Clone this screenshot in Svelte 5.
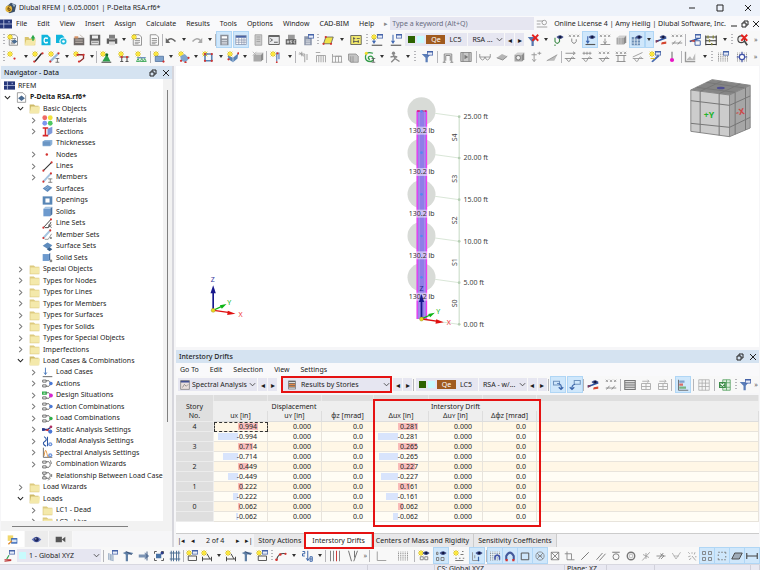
<script lang="ts">
  type Group = { span: number; grip?: boolean; items: string[] };
  type Node = { lv: number; icon: string; label: string; open?: boolean; leaf?: boolean; bold?: boolean };

  const line = (d: string, c = "#777", w = 1.3) => `<path d="${d}" fill="none" stroke="${c}" stroke-width="${w}"/>`;
  const fill = (d: string, c: string) => `<path d="${d}" fill="${c}"/>`;
  const box = (x: number, y: number, w: number, h: number, c: string) => `<rect x="${x}" y="${y}" width="${w}" height="${h}" fill="${c}"/>`;
  const dot = (x: number, y: number, c = "#d3322f", r = 1.5) => `<circle cx="${x}" cy="${y}" r="${r}" fill="${c}"/>`;

  const star = line("M4 0v8M0 4h8M1 1l6 6M7 1l-6 6", "#d9bc00", 1.2) + dot(4, 4, "#ffe92e", 2.2);
  const eye = fill("M6 4q4.500-5 9.500 0q-5 5-9.500 0", "#3c4a86") + dot(11, 4, "#10163c", 1.6);
  const win = box(8, 0, 8, 6, "#4563a8") + box(9, 2, 6, 3, "#e6ecf8");
  const page = fill("M3 1h8l3 3v11H3z", "#fafafa") + line("M3 1h8l3 3v11H3zM5 6h7M5 8.500h7M5 11h7M5 13h5", "#777", 1);
  const xxx = line("M1 1l3 3M4 1l-3 3M6.500 1l3 3M9.500 1l-3 3M12 1l3 3M15 1l-3 3", "#888", 1);
  const mesh = line("M2 2v12M5 2v12M8 2v12M11 2v12M14 2v12", "#777", 1) + line("M1 3h14M1 6h14M1 9h14M1 12h14", "#f7f7f7", 1);
  const links = line("M1 3h5v3H1zM1 10h5v3H1zM6 4h4q2 1 2 4t-2 4H6", "#555", 1.2);
  const cubeG = fill("M2 5l4-3h9l-3 3z", "#cfcfcf") + fill("M2 5h10v9H2z", "#a9a9a9") + fill("M12 5l3-3v9l-3 3z", "#8a8a8a");
  const beam = line("M1 10l6-2 8-3", "#2b56a4", 2.2);

  const icons: Record<string, string> = {
    app: fill("M2 6l6-5 7 3-2 9-7 2-4-4z", "#3d5068") + dot(5, 9, "#e2b43b", 4.5) + line("M6 6q-3 1-2 4t3 1q1-3-3-2", "#704c10", 1.3) + fill("M9 2l5 2-2 3z", "#9eb8cf"),
    flag: box(0, 2, 16, 12, "#26377a") + line("M0 8h16M5 2v12", "#cbd3ea", 1) + box(11, 4, 2, 2, "#8fa0d6"),
    new: page + star + fill("M6 10l4-3 4 3-4 3z", "#4b6d92"),
    open: fill("M1 4h5l1 2h8v9H1z", "#d9c46c") + fill("M3 8h13l-2 7H1z", "#f5e8a8") + fill("M9 6l3-5 3 5h-2v3h-2V6z", "#28a745"),
    cloud: fill("M2 1h8l4 4v10H2z", "#10b5dc") + line("M10.500 6q-5-2-5 2.500t5 2.500", "#fff", 1.8),
    cloudGear: fill("M0 1h8l3 3v8H0z", "#10b5dc") + dot(10, 10, "#eafaff", 5.5) + dot(10, 10, "#20b9dc", 4) + dot(10, 10, "#fff", 1.8),
    toolbox: box(1, 5, 14, 10, "#6f6a68") + box(2, 3, 5, 3, "#d69468") + line("M9 1l5 4M3 8h10M3 11h10", "#c9bfb8", 1.3),
    save: box(1, 1, 14, 14, "#626262") + box(4, 2, 8, 4, "#efefef") + box(3, 9, 10, 5, "#e2e2e2") + line("M4 11h8", "#626262", 1),
    print: box(1, 6, 14, 7, "#5d5d5d") + box(4, 1, 8, 5, "#808080") + box(4, 10, 8, 5, "#ddd") + line("M4 7h8", "#ccc", 1),
    docNew: page + star,
    doc: page,
    undo: line("M3 9q5-6 11 1", "#666", 2) + fill("M1 5v7h6z", "#666"),
    redo: line("M13 9q-5-6-11 1", "#aaa", 2) + fill("M15 5v7H9z", "#aaa"),
    panel: box(3, 1, 11, 14, "#8a8f98") + box(5, 3, 7, 3, "#fff") + line("M5 8.500h7M5 11h7M5 13.200h7", "#e6eaf0", 1.2),
    tableBlue: box(1, 2, 14, 12, "#fff") + box(1, 2, 14, 3, "#4864a6") + line("M1 2h14v12H1zM1 8h14M1 11h14M5 5v9M9 5v9M12 5v9", "#7d8aa6", 0.9),
    list: box(4, 1, 9, 14, "#ccc") + line("M4 1h9v14H4zM6 4h5M6 7h5M6 10h5", "#999", 1),
    term: box(1, 2, 14, 12, "#e9eaec") + line("M1 2h14v12H1z", "#555", 1.2) + box(1, 2, 14, 2, "#666") + line("M3 6l3 2-3 2M8 11h5", "#444", 1.1),
    hsc: box(4, 1, 9, 7, "#999") + box(1, 7, 14, 7, "#555") + line("M3 8.500v4M3 10.500h2M5 8.500v4M10 9H7v1.500h2V12H7M14 9h-2v3h2", "#fff", 0.9),
    panelWin: box(3, 3, 10, 12, "#8a94a8") + win + line("M5 8h6M5 10.500h6M5 13h6", "#fff", 1),
    draw: fill("M5 4h10l-3 9H2z", "#efe34a") + line("M5 4h10l-3 9H2z", "#555", 1) + dot(5, 4) + dot(2, 13) + dot(12, 13),
    sheet: box(1, 2, 14, 12, "#f2e96c") + line("M1 2h14v12H1zM4 6h3M9 6h4M4 10h8M5 4v8M11 8v4", "#555", 1.1),
    loadNew: line("M1 15h14", "#555", 1.5) + line("M4 3v9M2 9l2 3 2-3", "#3e67b1", 1.4) + win + star,
    load: line("M1 15h14", "#555", 1.5) + line("M4 1v11M2 9l2 3 2-3", "#3e67b1", 1.4) + win,
    filterX: fill("M1 4h13l-5 6v6H6v-6z", "#5577b0") + line("M7 1l8 8M15 1l-8 8", "#e5221e", 2.4),
    filter: fill("M1 4h12L9 9v6H6V9z", "#5a7db8") + win,
    eyeSup: line("M4 5v5q3 5 6 0V5M4 14v2", "#3e8a4a", 1.5) + eye,
    xSup: xxx + line("M5 6v4q3 5 6 0V7", "#888", 1.3),
    eyeLoad: line("M2 14h13", "#555", 1.5) + line("M5 3v9M3 9l2 3 2-3", "#3e67b1", 1.5) + eye,
    xLoad: xxx + line("M2 14h13M8 6v7M6 10l2 3 2-3", "#888", 1.2),
    solidG: cubeG + line("M5 4v10M8 4v10", "#ddd", 0.8),
    eyeGrid: box(1, 4, 11, 11, "#6b8db4") + line("M4.500 4v11M8.500 4v11M1 8h11M1 12h11", "#e3edf8", 1) + eye,
    eyeBeam: beam + fill("M9 11l6-1v3l-7 1z", "#d5452f") + fill("M1 8l5 1-5 3z", "#7f3a5a") + eye,
    xBeam: xxx + line("M1 12h14M2 14l4-5M9 14l4-5", "#888", 1.2),
    beamWin: beam + fill("M1 9l7-1v3z", "#d5452f") + win + line("M8 9h7v6H8z", "#4563a8", 1.3),
    abacus: line("M1 2v13M15 2v13M1 4h14M1 9h14M1 14h14", "#333", 1.3) + line("M4 2v4M6 7v4M9 12v3M11 2v4", "#8a8a3a", 1.8),
    magX: line("M11 9l4 6", "#444", 2.2) + `<circle cx="7" cy="7" r="4.500" fill="#eee" stroke="#444" stroke-width="1.500"/>` + line("M7 1l8 8M15 1l-8 8", "#e5221e", 2.4),
    node: star + dot(10, 10),
    line: star + line("M4 14L13 3", "#222", 1.6) + dot(3, 14) + dot(14, 3),
    member: star + line("M3 14L14 3", "#9ab9da", 3) + dot(3, 14) + dot(14, 3) + line("M10 10h5M12.500 10v5M10 15h5", "#555", 1),
    shape: star + line("M6 5h8v5l-5 4", "#902c2c", 1.8) + dot(6, 5) + dot(14, 5) + dot(8, 14),
    cone: star + fill("M9 4l5 10H3z", "#2ca04a") + dot(9, 5, "#126b2a", 2) + line("M2 15h13", "#333", 1.2),
    hinge: star + line("M2 8h13M5 8v6M12 8v6M3 14h4M10 14h4", "#555", 1.4) + dot(5, 8) + dot(12, 8),
    support: star + fill("M2 8h13l-2 2H4z", "#6f93bd") + line("M4 10l-2 4h4zM9 10l-2 4h4zM13 10l-2 4h4z", "#2ca04a", 1.1),
    surface: star + fill("M3 7h11v7H3z", "#7fa3cc") + line("M3 7h11v7H3z", "#4d6e99", 1) + dot(14, 14),
    poly: star + fill("M3 7l6-3 6 6-5 5-6-2z", "#7fa3cc") + dot(4, 13) + dot(10, 15) + dot(14, 9),
    opening: star + line("M4 4h9v9H4z", "#5b84b5", 2.2) + dot(4, 4) + dot(13, 4) + dot(4, 13) + dot(13, 13),
    solidNew: star + fill("M1 6l7 3 7-6-1 7-6 5-6-4z", "#5b84b5") + line("M8 9v6", "#c9dcef", 1) + dot(2, 11) + dot(15, 3),
    solidOff: cubeG + line("M1 1l5 5M6 1L1 6", "#aaa", 1),
    rod: star + box(9, 2, 3, 9, "#d9e3f2") + line("M9 2v12M12 2v9", "#3b65a9", 1.2) + dot(10, 3) + dot(9, 15, "#d3322f", 1.2),
    rodG: line("M1 4h8M5 1v6M2 2l6 5M9 4v11M12 4v8", "#999", 1.2),
    frameG: line("M2 15V6h12v9M5 6v9M8 6v9M11 6v9M1 2h6", "#999", 1.1),
    frameG2: line("M2 15V4M6 15V7h8v8M2 7h12M10 7v8M1 15h14", "#999", 1.1),
    block: fill("M2 4h10l3 3v8H5l-3-3z", "#c4c4c4") + line("M2 4h10l3 3v8H5l-3-3zM5 7v8M8 7v8", "#888", 1),
    spiral: line("M12 3q-9-3-10 4t7 7q5-1 3-5t-6-1q-1 3 2 3", "#339b49", 1.7) + line("M10 10h5M12.500 10v5M10 15h5", "#555", 1) + dot(3, 3, "#f4de2a", 2),
    person: dot(6, 3, "#888", 2.2) + line("M6 5l2 5 6 4M2 8l5-1 4 1M8 10l-5 5", "#888", 1.8),
    arch: line("M3 15V4h10v11M5 13V6h6v7M1 15h4M11 15h4", "#888", 1.3),
    film: box(1, 2, 14, 12, "#c8c8c8") + line("M1 2h14v12H1zM4 2v12M12 2v12", "#777", 1) + fill("M6 5l5 3-5 3z", "#777"),
    curve: line("M1 4v4q4 8 7 0q3 8 7 0V4M1 8h14", "#888", 1.1),
    slab: fill("M1 9l7-5 7 3-6 5z", "#b5b5b5") + line("M1 9l8 3 6-5", "#888", 1.2),
    cam: cubeG + `<circle cx="7" cy="9" r="3" fill="#eee" stroke="#666"/>`,
    tee: line("M2 5h7M5.500 2v12M3 11l2.500 3 2.500-3M10 3h5M12.500 1v4", "#999", 1.3),
    wedge: fill("M1 13l14-8-4 8z", "#bbb") + line("M1 13l14-8", "#888", 1),
    res1: line("M2 3h12M12 1l3 2-3 2M1 10h14M3 10q4 8 6 0q2-4 5 0", "#888", 1.2),
    res2: line("M2 3h12M4 1v4M8 1v4M12 1v4M1 10h14M3 10q4 8 6 0q2-4 5 0", "#888", 1.1),
    res3: xxx + line("M1 10h14M3 10q4 8 6 0q2-4 5 0", "#888", 1.2),
    res4: xxx + line("M1 6h14M4 6v8M12 6v8M2 14h12", "#888", 1.2),
    res5: line("M1 8l13-6M1 10h14M3 10q4 8 6 0q2-4 5 0", "#999", 1.2),
    wizard: star + win + fill("M3 14l9-9 2 2-9 8z", "#4a6cb0") + line("M2 10h6", "#e0c020", 1.5),
    pin: line("M8 1v9", "#555", 1.2) + dot(8, 12, "#e815c4", 2.8),
    axes: line("M2 1v13h13", "#999", 1.8) + fill("M4 11l4-4 3 4 4-8v9H4z", "#bbb"),
    gridWin: mesh + win,
    gridPin: mesh + line("M8 1v14M1 8h14", "#3e50a8", 1.4) + `<circle cx="8" cy="8" r="3.500" fill="#fff" stroke="#3e50a8" stroke-width="1.500"/>`,
    // navigator
    file: fill("M2 1h8l4 4v10H2z", "#fff") + line("M2 1h8l4 4v10H2z", "#777", 1) + fill("M3 9l5-4 5 4-5 4z", "#49698f"),
    folder: fill("M1 2h6l2 2h6v11H1z", "#ddca7f") + box(2, 5, 13, 9, "#f4e9ab"),
    folderOpen: fill("M1 2h6l2 2h5v11H1z", "#cdb968") + fill("M3 5h13l-1 10H1z", "#f4e9ab"),
    materials: dot(4, 4, "#ef6a66", 3.5) + dot(12, 4, "#f0e23c", 3.5) + dot(4, 12, "#7c96f0", 3.5) + dot(12, 12, "#4ec861", 3.5),
    sections: fill("M8 4l7-3v9l-7 4z", "#7e97d8") + line("M1 3h8M5 3v11M1 14h8", "#d5272a", 2.2),
    thick: fill("M1 5l3-2h11v6l-3 3H1z", "#8db2d8") + fill("M1 5h11v6H1z", "#6b96c4"),
    dotRed: dot(7, 8, "#d3322f", 1.8),
    lineT: line("M2 14L14 2", "#333", 1.5) + dot(2, 14) + dot(14, 2),
    memberT: line("M2 14L13 2", "#a6c4e0", 3) + dot(2, 14) + dot(13, 2) + line("M9 10h6M12 10v5M9 15h6", "#666", 1.1),
    surfT: fill("M1 8l7-5 7 4-7 6z", "#5e8bbd") + line("M4 8l5-3M6 10l5-4", "#a4c4e2", 1),
    openT: box(1, 2, 14, 12, "#5886b6") + box(5, 5, 6, 6, "#fff"),
    solidT: fill("M2 4l3-3h10l-3 3z", "#a8c6e4") + box(2, 4, 10, 11, "#6d9ace") + fill("M12 4l3-3v11l-3 3z", "#4772a5"),
    setT: line("M2 14L13 2M4 14h5l4-8", "#333", 1.3) + dot(2, 14) + dot(13, 2) + line("M9 10l5 4M14 10l-5 4", "#555", 1.2),
    msetT: line("M2 13L12 2", "#a6c4e0", 3) + line("M4 15h5l5-8", "#888", 1.2) + dot(2, 13) + dot(12, 2) + dot(13, 13, "#777"),
    ssetT: fill("M1 7l7-5 7 4-6 6z", "#5e8bbd") + fill("M7 12l4-3 4 3-4 3z", "#39608c"),
    vsetT: box(1, 3, 9, 10, "#6d9ace") + fill("M10 3l2-2v10l-2 2z", "#4772a5") + dot(13, 13, "#888", 2),
    lcT: line("M1 14h14", "#777", 1.6) + line("M5 1v10M3 8l2 3 2-3", "#4f7ebe", 1.4),
    actT: links + dot(13, 8, "#4a78d6", 2.5),
    dsT: line("M1 3h5v3H1z", "#2fae4a", 2) + line("M1 10h5v3H1zM6 4h4q2 1 2 4t-2 4H6", "#555", 1.2) + dot(13, 8, "#d624d0", 2.8),
    lcoT: links + dot(13, 8, "#2fae4a", 2.5),
    statT: line("M1 8h7l6-4", "#2b3b8c", 2) + fill("M0 6h4v4H0z", "#2b3b8c") + fill("M4 9l6-2v4z", "#d3322f") + dot(12, 11, "#4a78d6", 3) + dot(13, 4, "#b03060", 2),
    modT: line("M3 1q6 4 1 7t2 7M8 1v14", "#2b56a4", 1.5) + dot(12, 12, "#6f95dc", 3) + dot(12, 12, "#fff", 1),
    specT: line("M2 1v14h13", "#555", 1.2) + line("M3 13q2-14 4-4t4 3", "#e08a2a", 1.2) + dot(12, 12, "#6f95dc", 3) + dot(12, 12, "#fff", 1),
    wizT: links + line("M12 2l2 5", "#888", 1.5),
    relT: links + line("M3 6v4M12 12l-3 3M14 6v4", "#555", 1.2),
    navData: fill("M1 2h8v8H1z", "#f0d76c") + box(6, 6, 9, 8, "#2f62b5") + box(7, 8, 7, 4, "#d8e4f6") + line("M2 15l5-5", "#e08a2a", 2),
    navEye: fill("M1 8q7-8 14 0q-7 8-14 0", "#6272b8") + dot(8, 8, "#1d265c", 3.2) + dot(7, 7, "#fff", 0.9),
    navCam: box(1, 4, 9, 8, "#555") + fill("M10 8l5-4v8z", "#555"),
    // table panel
    spectral: box(1, 1, 14, 14, "#e9dfdc") + box(1, 1, 14, 3, "#3f4f96") + line("M1 1h14v14H1zM4 12l3-5 3 3 3-3", "#666", 1),
    stories: box(2, 1, 12, 14, "#666") + line("M3 4h10M3 13h10", "#ddd", 1.8) + line("M3 7h10M3 10h10", "#e58a4a", 1.8),
    pickA: line("M2 3h8v5H2z", "#6f93bd", 1.4) + line("M7 6q7 0 5 8M9 11l3 3 3-3", "#3b65a9", 1.6),
    pickB: line("M7 2h8v5H7z", "#6f93bd", 1.4) + line("M8 7q-5 1-4 7M1 11l3 3 3-3", "#3b65a9", 1.6),
    tableG: box(1, 2, 14, 12, "#ddd") + line("M1 2h14v12H1zM1 5h14M1 8h14M1 11h14", "#777", 1.4),
    tableUp: line("M2 6h12v8H2zM2 10h12M8 6v8M3 3h9M10 1l2 2-2 2", "#aaa", 1.2),
    bars: line("M2 1v14h13", "#666", 1.2) + box(3, 2, 7, 3, "#7fa3cc") + box(3, 6, 5, 3, "#d96c66") + box(3, 10, 9, 3, "#77b583"),
    tableL: box(1, 1, 14, 14, "#f4f4f4") + line("M1 1h14v14H1zM1 5.500h14M1 10h14M5.500 1v14M10 1v14", "#aaa", 1),
    excel: fill("M5 1h10v14H5z", "#dceede") + line("M5 1h10v14H5zM10 1v14M5 5h10M5 11h10", "#4c9b58", 1) + box(0, 4, 9, 8, "#3c8c49") + line("M2 6l5 4M7 6l-5 4", "#fff", 1.4),
    // bottom bar
    cs: line("M2 13h9M2 15l9-1", "#b33", 1.5) + line("M5 12l3-5", "#2ca04a", 1.5) + win,
    bWin: fill("M3 4l7 3v8l-7-2z", "#8fa5bf") + line("M5 5v9M8 6v8", "#fff", 0.9) + win,
    bWinNew: star + line("M3 8h11v6H3z", "#555", 1.3) + win,
    bT: fill("M1 4l5-2 9 2-2 2H8v9H5V6z", "#5f7fa5") + line("M5 2l8 4", "#2c3f63", 1),
    bArrow: fill("M1 6h8V3l6 5-6 5v-3H1z", "#7b93b3") + line("M12 2v12", "#39537c", 1.2),
    bSel: line("M2 5V2h3M11 2h3v3M14 11v3h-3M5 14H2v-3", "#555", 1.3) + box(4, 5, 7, 6, "#4772a5") + dot(12, 4, "#2b3b8c", 2),
    bGridBlue: line("M3 1v14M6 1v14M10 1v14M13 1v14M1 4h14M1 12h14", "#4b6d92", 1.3),
    dim: star + line("M2 12h12M2 9v6M14 9v6M8 5l4 7", "#444", 1.3),
    path: line("M2 14q2-11 12-9", "#444", 1.4) + dot(2, 13, "#d3322f", 1.8) + dot(7, 6, "#d3322f", 1.8) + dot(14, 5),
    num: line("M2 2h3v3H2v3h3M9 1v13M7 11l2 3 2-3M12 9h3v6h-3zM12 12h3", "#3b65a9", 1.3),
    vlines: line("M2 1v14M6 1v14M14 1v14", "#777", 1.2) + line("M10 1v14", "#c33", 1.3),
    vee: line("M2 1l4 14M14 1L9 15M10 1v9", "#666", 1.2),
    ell: line("M3 2v12h12", "#999", 1.2),
    grid: mesh,
    eyeStar: star + line("M3 9h4v4H3zM9 9h4v4H9z", "#777", 1.1) + eye,
    eyePts: line("M2 3h2v3H2zM2 10h3v4H2zM8 10h4v4H8z", "#777", 1.2) + eye,
    ptStar: star + line("M12 2h2M10 6h4M3 11h2M8 11h2M13 11h2M3 14h11", "#777", 1.3),
    eyePtr: line("M2 3v11h9M5 7v4", "#888", 1.1) + eye + line("M10 9v6", "#3b65a9", 1.6),
    gridMag: mesh + line("M8 13V9q3-5 6 0v4", "#3e50a8", 2),
    magnet: line("M3 13V8q5-9 10 0v5", "#445a9c", 2.8) + box(2, 12, 3, 3, "#d3322f") + box(11, 12, 3, 3, "#d3322f"),
    sq: line("M3 4h10v9H3z", "#555", 1.3),
    circX: `<circle cx="8" cy="8" r="5.500" fill="none" stroke="#777"/>` + line("M4 4l8 8M12 4l-8 8M5 8h6", "#777", 1),
    boxX: line("M3 3h10v10H3zM3 3l10 10M13 3L3 13", "#777", 1.1),
    perp: line("M4 2v11h10M1 5h9v8", "#888", 1.2),
    diag: line("M3 13L13 3", "#777", 1.3),
    diag2: line("M2 13l8-9M6 14l8-9", "#777", 1.2),
    tang: line("M3 3h10", "#777", 1.3) + `<circle cx="8" cy="9" r="4" fill="none" stroke="#777" stroke-width="1.200"/>`,
    ring: `<circle cx="8" cy="8" r="5" fill="none" stroke="#777" stroke-width="1.800"/><circle cx="8" cy="8" r="2.500" fill="none" stroke="#aaa"/>`,
    snapA: line("M3 14L13 3M4 6l8 4M8 4v8", "#999", 1.1),
    snapB: line("M2 8h12M5 12l6-8M7 5l5 3-4 4", "#888", 1.2),
    snapC: line("M3 4l5 8 6-9M5 8h7", "#aaa", 1.1),
    snapD: line("M3 3l2 2M8 3v2M12 3l-1 3M3 9l3-1M8 8l5 6M4 13l3-2M12 9h2", "#999", 1.1),
    quad: line("M2 2h4v4H2zM10 2h4v4h-4zM2 10h4v4H2zM10 10h4v4h-4z", "#777", 1.1),
    dash: line("M3 3h2M7 3h2M11 3h2v2M13 8v2M13 13h-2M9 13H7M5 13H3v-2M3 8V6", "#777", 1.3),
    tilt: fill("M5 4h10l-4 8H1z", "#9eabb8") + line("M5 4h10l-4 8H1z", "#444", 1.2),
    hbeam: line("M1 4v8M15 4v8M1 8h14", "#444", 1.5),
    listFind: line("M1 4h8M1 8h5M1 12h14", "#888", 1) + `<circle cx="11" cy="6" r="3" fill="none" stroke="#888"/>`,
  };

  // "*" marks a pressed button, "^" adds a drop-down arrow after it, ">" is the overflow mark
  const mainBar: Group[] = [
    { span: 160, grip: true, items: ["new", "open", "cloud", "cloudGear", "toolbox", "save", "print^", "docNew", "doc"] },
    { span: 53, items: ["undo^", "redo^"] },
    { span: 102, items: ["*panel", "*tableBlue", "list", "term", "hsc", "panelWin"] },
    { span: 47, grip: true, items: ["draw^", "sheet"] },
    { span: 38, grip: true, items: ["loadNew", "load"] },
  ];
  const viewBar: Group[] = [
    { span: 163, items: ["filterX^", "eyeSup", "xSup", "*eyeLoad", "xLoad", "solidG", "*eyeGrid^", "eyeBeam", "xBeam"] },
    { span: 44, items: ["beamWin", "abacus^"] },
    { span: 28, grip: true, items: ["magX", ">"] },
  ];
  const editBar: Group[] = [
    { span: 93, grip: true, items: ["node^", "line", "member^", "shape^"] },
    { span: 54, items: ["cone", "hinge", "support"] },
    { span: 117, items: ["surface^", "poly^", "opening^", "solidNew^", "solidOff"] },
    { span: 29, items: ["rod^"] },
    { span: 119, items: ["rodG", "frameG", "frameG2", "block", "spiral^", "person^"] },
    { span: 22, grip: true, items: ["filter"] },
    { span: 38, items: ["arch", "film"] },
    { span: 86, items: ["curve", "slab", "cam", "tee", "wedge"] },
    { span: 121, items: ["res1", "res2", "res3", "res4", "res5", "wizard", "pin"] },
    { span: 29, items: ["axes^"] },
    { span: 48, grip: true, items: ["gridWin", "gridPin", ">"] },
  ];
  const resultBar: Group[] = [
    { span: 36, items: ["*pickA", "*pickB"] },
    { span: 38, items: ["eyeBeam", "xBeam"] },
    { span: 53, items: ["tableG", "tableUp", "tableUp"] },
    { span: 22, items: ["*bars"] },
    { span: 21, items: ["tableL"] },
    { span: 20, items: ["excel"] },
    { span: 23, grip: true, items: ["filter", ">"] },
  ];
  const snapBar: Group[] = [
    { span: 80, items: ["bWin", "bT", "bArrow", "bSel", "bGridBlue"] },
    { span: 87, items: ["bWinNew", "dim^", "dim", "bT", "bWinNew"] },
    { span: 52, grip: true, items: ["path^", "num^"] },
    { span: 44, items: ["vlines", "vee", ">"] },
    { span: 44, items: ["ell", "grid"] },
    { span: 72, items: ["eyeStar", "*eyePts", "ptStar", "*eyePtr"] },
    { span: 276, items: ["*gridMag", "*magnet", "*sq", "*circX", "boxX", "perp", "diag", "diag2", "tang", "ring", "snapA", "snapB", "snapC", "snapD", "*quad", "*dash", "*tilt", "*hbeam"] },
  ];

  const menus = ["File", "Edit", "View", "Insert", "Assign", "Calculate", "Results", "Tools", "Options", "Window", "CAD-BIM", "Help"];
  const panelMenus = ["Go To", "Edit", "Selection", "View", "Settings"];

  const tree: Node[] = [
    { lv: 0, icon: "flag", label: "RFEM", leaf: true },
    { lv: 1, icon: "file", label: "P-Delta RSA.rf6*", open: true, bold: true },
    { lv: 2, icon: "folderOpen", label: "Basic Objects", open: true },
    { lv: 3, icon: "materials", label: "Materials" },
    { lv: 3, icon: "sections", label: "Sections" },
    { lv: 3, icon: "thick", label: "Thicknesses", leaf: true },
    { lv: 3, icon: "dotRed", label: "Nodes" },
    { lv: 3, icon: "lineT", label: "Lines" },
    { lv: 3, icon: "memberT", label: "Members" },
    { lv: 3, icon: "surfT", label: "Surfaces", leaf: true },
    { lv: 3, icon: "openT", label: "Openings", leaf: true },
    { lv: 3, icon: "solidT", label: "Solids", leaf: true },
    { lv: 3, icon: "setT", label: "Line Sets", leaf: true },
    { lv: 3, icon: "msetT", label: "Member Sets", leaf: true },
    { lv: 3, icon: "ssetT", label: "Surface Sets", leaf: true },
    { lv: 3, icon: "vsetT", label: "Solid Sets", leaf: true },
    { lv: 2, icon: "folder", label: "Special Objects" },
    { lv: 2, icon: "folder", label: "Types for Nodes" },
    { lv: 2, icon: "folder", label: "Types for Lines" },
    { lv: 2, icon: "folder", label: "Types for Members" },
    { lv: 2, icon: "folder", label: "Types for Surfaces" },
    { lv: 2, icon: "folder", label: "Types for Solids" },
    { lv: 2, icon: "folder", label: "Types for Special Objects" },
    { lv: 2, icon: "folder", label: "Imperfections" },
    { lv: 2, icon: "folderOpen", label: "Load Cases & Combinations", open: true },
    { lv: 3, icon: "lcT", label: "Load Cases" },
    { lv: 3, icon: "actT", label: "Actions" },
    { lv: 3, icon: "dsT", label: "Design Situations" },
    { lv: 3, icon: "actT", label: "Action Combinations" },
    { lv: 3, icon: "lcoT", label: "Load Combinations" },
    { lv: 3, icon: "statT", label: "Static Analysis Settings" },
    { lv: 3, icon: "modT", label: "Modal Analysis Settings" },
    { lv: 3, icon: "specT", label: "Spectral Analysis Settings" },
    { lv: 3, icon: "wizT", label: "Combination Wizards" },
    { lv: 3, icon: "relT", label: "Relationship Between Load Case", leaf: true },
    { lv: 2, icon: "folder", label: "Load Wizards" },
    { lv: 2, icon: "folderOpen", label: "Loads", open: true },
    { lv: 3, icon: "folder", label: "LC1 - Dead" },
    { lv: 3, icon: "folder", label: "LC2 - Live" },
  ];

  const stories = [
    { no: 4, u: 0.994, du: 0.281 },
    { no: 3, u: 0.714, du: 0.265 },
    { no: 2, u: 0.449, du: 0.227 },
    { no: 1, u: 0.222, du: 0.161 },
    { no: 0, u: 0.062, du: 0.062 },
  ];
  const rows = stories.flatMap(s => [
    { no: String(s.no), u: s.u, du: s.du },
    { no: "", u: -s.u, du: -s.du },
  ]);
  const BAR = 20;
  const maxU = Math.max(...stories.map(s => s.u));
  const maxDu = Math.max(...stories.map(s => s.du));

  const levels = [
    { y: 64, label: "25.00 ft", story: "S4" },
    { y: 188, label: "20.00 ft", story: "S3" },
    { y: 313, label: "15.00 ft", story: "S2" },
    { y: 438, label: "10.00 ft", story: "S1" },
    { y: 562, label: "5.00 ft", story: "S0" },
  ];

  const tabs = ["Story Actions", "Interstory Drifts", "Centers of Mass and Rigidity", "Sensitivity Coefficients"];
  let activeTab = $state("Interstory Drifts");
</script>

{#snippet icon(name: string)}
  <svg class="ico" viewBox="0 0 16 16" aria-hidden="true">{@html icons[name]}</svg>
{/snippet}

{#snippet groups(list: Group[])}
  {#each list as g, i}
    {#if g.grip}<span class="grip"></span>{:else if i > 0}<span class="sep"></span>{/if}
    <div class="group" style="flex-grow:{g.span}">
      {#each g.items as item}
        {@const name = item.replace(/[*^]/g, "")}
        {#if name === ">"}
          <button class="more" aria-label="More">»</button>
        {:else}
          <button class="tool" class:on={item.startsWith("*")} aria-label={name}>{@render icon(name)}</button>
          {#if item.endsWith("^")}
            <button class="caret" class:on={item.startsWith("*")} aria-label="{name} options"></button>
          {/if}
        {/if}
      {/each}
    </div>
  {/each}
{/snippet}

{#snippet combo(label: string, value: string)}
  <span class="combo">
    <select aria-label={label}><option>{value}</option></select>
    <svg class="chev" viewBox="0 0 8 8" aria-hidden="true"><path d="M1 2.500l3 3 3-3" /></svg>
  </span>
{/snippet}

{#snippet loadCase(value: string)}
  <div class="lc">
    <span class="swatch green"></span>
    <span class="swatch cyan"></span>
    <span class="tag">Qe</span>
    <span class="lcno">LC5</span>
    {@render combo("Load case", value)}
  </div>
{/snippet}

{#snippet stepper()}
  <span class="stepper">
    <button aria-label="Previous">◂</button>
    <button aria-label="Next">▸</button>
  </span>
{/snippet}

{#snippet barCell(v: number, max: number)}
  <span class="bar" class:neg={v < 0} style="width:{Math.ceil(Math.abs(v) / max * BAR)}px"></span>
  <span class="num">{v.toFixed(3)}</span>
{/snippet}

{#snippet winButtons()}
  <button aria-label="Float"><svg viewBox="0 0 8 8"><path d="M1 3h4v4H1zM3 3V1h4v4H5" /></svg></button>
  <button aria-label="Close"><svg viewBox="0 0 8 8"><path d="M1 1l6 6M7 1L1 7" /></svg></button>
{/snippet}

{#snippet triad()}
  <path d="M110 120V60" stroke="#17178c" stroke-width="5" />
  <path d="M110 46l8 24h-16z" fill="#17178c" />
  <path d="M112 120l24-11" stroke="#0db515" stroke-width="4" />
  <path d="M150 102l-20 4 6 10z" fill="#0db515" />
  <path d="M112 121l48 7" stroke="#e01010" stroke-width="4" />
  <path d="M177 131l-23-9-2 13z" fill="#e01010" />
  <circle cx="110" cy="121" r="6" fill="#e8d820" stroke="#7c7410" />
{/snippet}

<div class="app">
  <header class="title">
    {@render icon("app")}
    <h1>Dlubal RFEM | 6.05.0001 | P-Delta RSA.rf6*</h1>
    <div class="winctl">
      <button aria-label="Minimize"><svg viewBox="0 0 8 8"><path d="M1 4h6" /></svg></button>
      <button aria-label="Maximize"><svg viewBox="0 0 8 8"><path d="M1 1h6v6H1z" /></svg></button>
      <button aria-label="Close"><svg viewBox="0 0 8 8"><path d="M1 1l6 6M7 1L1 7" /></svg></button>
    </div>
  </header>

  <nav class="menubar">
    {@render icon("flag")}
    {#each menus as m}<button>{m}</button>{/each}
    <span class="go">▸</span>
    <input type="text" placeholder="Type a keyword (Alt+Q)" aria-label="Keyword search" />
    {@render icon("listFind")}
    <span class="license">Online License 4 | Amy Heilig | Dlubal Software, Inc.</span>
    <div class="mdictl">
      <button aria-label="Minimize"><svg viewBox="0 0 8 8"><path d="M1 6h6" /></svg></button>
      {@render winButtons()}
    </div>
  </nav>

  <div class="toolbar">
    {@render groups(mainBar)}
    <div class="lcbox">{@render loadCase("RSA ...")}{@render stepper()}</div>
    {@render groups(viewBar)}
  </div>
  <div class="toolbar">{@render groups(editBar)}</div>

  <main>
    <aside class="nav">
      <div class="dock"><h2>Navigator - Data</h2>{@render winButtons()}</div>
      <div class="treebox">
        <ul>
          {#each tree as n}
            <li class="lv{n.lv}" class:bold={n.bold}>
              {#if n.lv > 0}
                {#if n.leaf}
                  <span class="twist"></span>
                {:else}
                  <button class="twist" aria-label="Toggle {n.label}">
                    <svg viewBox="0 0 8 8" class:open={n.open}><path d="M2.500 1l3 3-3 3" /></svg>
                  </button>
                {/if}
              {/if}
              {@render icon(n.icon)}
              <span>{n.label}</span>
            </li>
          {/each}
        </ul>
        <div class="vscroll"><span></span></div>
      </div>
      <div class="hscroll"><span></span></div>
      <div class="navtabs">
        <button class="cur" aria-label="Data">{@render icon("navData")}</button>
        <button aria-label="Display">{@render icon("navEye")}</button>
        <button aria-label="Views">{@render icon("navCam")}</button>
      </div>
    </aside>

    <section class="work">
      <div class="view">
        <svg class="scene" viewBox="0 0 582 281" preserveAspectRatio="xMidYMid meet">
          <svg x="0" y="204" width="200" height="130" viewBox="0 0 600 390">
            {@render triad()}
            <text x="103" y="37" fill="#3a3aa0">Z</text>
            <text x="152" y="106" fill="#0db515">Y</text>
            <text x="186" y="140" fill="#f03030">X</text>
          </svg>

          <svg x="214" y="24" width="120" height="240" viewBox="0 0 360 720">
            <path d="M206 78V703" stroke="#c5d9c3" stroke-width="3" />
            {#each levels as l}
              <path d="M134 {l.y + 6}L206 {l.y + 16}" stroke="#c5d9c3" stroke-width="2" />
              <circle cx="206" cy={l.y + 16} r="4" fill="#b5ceb3" />
              <circle cx="93" cy={l.y} r="42" fill="#d8dbd7" />
            {/each}
            <path d="M94 688L206 703" stroke="#c5d9c3" stroke-width="2" />
            <circle cx="206" cy="703" r="4" fill="#b5ceb3" />
            <rect x="79" y="62" width="30" height="625" fill="#8f7de8" />
            <path d="M80 62V687M108 62V687" stroke="#f03cf0" stroke-width="4" />
            <path d="M86 62V687M103 62V687" stroke="#c59aee" stroke-width="2" />
            <path d="M80 63h28" stroke="#e0106a" stroke-width="5" stroke-dasharray="8 3" />
            {#each levels as l}
              <circle cx="93" cy={l.y} r="4" fill="#5a86ee" />
              <rect x="56" y={l.y + 46} width="74" height="24" fill="#fff" opacity="0.5" />
              <text x="55" y={l.y + 65} fill="#333">130.2 lb</text>
              <text x="219" y={l.y + 23} fill="#444">{l.label}</text>
              <text transform="translate(198 {l.y + 90}) rotate(-90)" fill="#444">{l.story}</text>
            {/each}
            <text x="219" y="710" fill="#444">0.00 ft</text>
            <svg x="-17" y="566" width="200" height="180" viewBox="0 0 200 180" overflow="visible">
              {@render triad()}
            </svg>
            <text x="87" y="602" fill="#26268c">Z</text>
            <text x="137" y="671" fill="#0db515">Y</text>
            <text x="169" y="706" fill="#f03030">X</text>
          </svg>

          <svg x="494" y="0" width="90" height="80" viewBox="0 0 270 240">
            <g stroke="#888" stroke-width="3" stroke-linejoin="round">
              <path d="M61 72L125 41L239 58L177 87z" fill="#858585" />
              <path d="M61 72L177 87V212L61 196z" fill="#cccccc" />
              <path d="M177 87L239 58V186L177 212z" fill="#a6a6a6" />
            </g>
            <g stroke="#777" stroke-width="3" fill="none">
              <path d="M89 76V200M146 83V208M61 104L177 118L239 90M61 172L177 184L239 154M194 80V205M225 65V192" />
              <path d="M89 76L153 46M146 83L209 54M78 64L194 79M108 49L222 66" />
            </g>
            <ellipse cx="151" cy="66" rx="12" ry="4" fill="#4e4e92" />
            <text class="face" x="100" y="155" fill="#22b32b">+Y</text>
            <text class="face" x="197" y="147" fill="#cf4545" transform="rotate(-10 206 140)">-X</text>
          </svg>
        </svg>
      </div>

      <div class="panel">
        <div class="dock"><h2>Interstory Drifts</h2>{@render winButtons()}</div>
        <nav class="menubar sub">
          {#each panelMenus as m}<button>{m}</button>{/each}
        </nav>
        <div class="toolbar">
          <div class="field analysis">{@render icon("spectral")}{@render combo("Analysis", "Spectral Analysis")}</div>
          {@render stepper()}
          <div class="field results marked">{@render icon("stories")}{@render combo("Results", "Results by Stories")}</div>
          {@render stepper()}
          <span class="sep"></span>
          <div class="lcbox case">{@render loadCase("RSA - w/...")}{@render stepper()}</div>
          <span class="sep"></span>
          {@render groups(resultBar)}
        </div>

        <div class="sheet">
          <table>
            <colgroup>
              <col class="cno" /><col class="c1" /><col class="c1" /><col class="c2" /><col class="c3" /><col class="c1" /><col class="c1" /><col />
            </colgroup>
            <thead>
              <tr class="strip"><th></th><th></th><th></th><th></th><th></th><th></th><th></th><th></th></tr>
              <tr>
                <th rowspan="2" class="rowno">Story<br />No.</th>
                <th colspan="3">Displacement</th>
                <th colspan="3">Interstory Drift</th>
                <th></th>
              </tr>
              <tr class="units">
                <th>u<small>X</small> [in]</th>
                <th>u<small>Y</small> [in]</th>
                <th>φ<small>Z</small> [mrad]</th>
                <th>Δu<small>X</small> [in]</th>
                <th>Δu<small>Y</small> [in]</th>
                <th>Δφ<small>Z</small> [mrad]</th>
                <th></th>
              </tr>
            </thead>
            <tbody>
              {#each rows as r, i}
                <tr>
                  <th class="rowno">{r.no}</th>
                  <td class:focus={i === 0}>{@render barCell(r.u, maxU)}</td>
                  <td>0.000</td>
                  <td>0.0</td>
                  <td>{@render barCell(r.du, maxDu)}</td>
                  <td>0.000</td>
                  <td>0.0</td>
                  <td></td>
                </tr>
              {/each}
            </tbody>
          </table>
          <div class="highlight"></div>
        </div>

        <div class="tabs">
          <button class="step" aria-label="First">|◂</button>
          <button class="step" aria-label="Previous">◂</button>
          <span class="count">2 of 4</span>
          <button class="step" aria-label="Next">▸</button>
          <button class="step" aria-label="Last">▸|</button>
          {#each tabs as t}
            <button class="tab" class:cur={t === activeTab} class:marked={t === activeTab} onclick={() => (activeTab = t)}>{t}</button>
          {/each}
        </div>
      </div>
    </section>
  </main>

  <div class="toolbar snap">
    <button class="tool" aria-label="Coordinate system">{@render icon("cs")}</button>
    <div class="field csys"><span class="swatch cyan"></span>{@render combo("Coordinate system", "1 - Global XYZ")}</div>
    <span class="sep"></span>
    {@render groups(snapBar)}
  </div>
  <footer>
    <span></span><span></span><span>CS: Global XYZ</span><span>Plane: XZ</span><span></span><span></span><span></span>
  </footer>
</div>

<style>
  :global(body) { margin: 0; }
  .app { display: flex; flex-direction: column; height: 100vh; overflow: hidden; background: #f6f6f8; color: #1c1c1c; font: 7px/10px "Noto Sans", "Open Sans", sans-serif; }
  button, input, select { font: inherit; color: inherit; border: 0; padding: 0; margin: 0; background: none; }
  h1, h2 { font: inherit; margin: 0; }
  .ico { width: 12px; height: 12px; flex: none; display: block; }

  .title { display: flex; align-items: center; gap: 2px; height: 16px; flex: none; padding: 0 8px 0 5px; background: #edf2fa; }
  .title h1 { flex: 1; }
  .winctl { display: flex; gap: 20px; }
  .winctl button, .mdictl button, .dock button { width: 8px; height: 8px; display: flex; }
  .winctl svg, .mdictl svg, .dock svg { width: 8px; height: 8px; fill: none; stroke: #222; }

  .menubar { display: flex; align-items: center; gap: 10px; height: 15px; flex: none; background: #f9f9fb; white-space: nowrap; }
  .menubar > .ico { margin-right: -6px; }
  .menubar .go { color: #888; margin-right: -8px; }
  .menubar input { flex: 1; min-width: 0; height: 13px; padding: 0 2px; background: #e6e6f1; }
  .menubar input::placeholder { color: #666c80; }
  .menubar input + .ico { margin: 0 -4px 0 -8px; }
  .mdictl { display: flex; gap: 3px; margin-left: -6px; }
  .sub { height: 13px; padding-left: 4px; gap: 11px; }

  .toolbar { display: flex; align-items: center; height: 17px; flex: none; background: #f8f8f8; padding-left: 2px; overflow: hidden; }
  .group { flex: 1 1 0; min-width: 0; display: flex; align-items: center; justify-content: space-around; }
  .tool { width: 14px; height: 15px; display: flex; align-items: center; justify-content: center; flex: none; box-sizing: border-box; }
  .on { background: #cfe7fb; box-shadow: 0 0 0 1px #b0d6f5; }
  .caret { width: 7px; height: 15px; display: flex; align-items: center; justify-content: center; }
  .caret::after { content: ""; border: 2px solid transparent; border-top: 3px solid #333; border-bottom: 0; }
  .more { color: #666; }
  .sep { width: 1px; height: 12px; background: #b5b5b9; flex: none; }
  .grip { width: 2px; height: 12px; margin-left: 1px; flex: none; background: repeating-linear-gradient(#b5b5b9 0 1px, transparent 1px 3px); }

  .combo { position: relative; display: flex; align-items: center; flex: 1; min-width: 0; height: 13px; }
  .combo select { appearance: none; width: 100%; height: 13px; padding-right: 9px; }
  .chev { position: absolute; right: 1px; width: 7px; height: 7px; fill: none; stroke: #444; pointer-events: none; }
  .lcbox { display: flex; flex: none; align-items: center; }
  .case { margin-left: 2px; }
  .lc { display: flex; align-items: center; height: 13px; padding-left: 3px; gap: 2px; background: #e6e6f1; }
  .lc .combo { border-left: 1px solid #f8f8f8; padding-left: 4px; margin-left: 4px; flex: none; }
  .lc select { padding-right: 11px; }
  .swatch { width: 7px; height: 7px; flex: none; }
  .green { background: #2d6200; }
  .cyan { background: #c8fbfd; }
  .tag { width: 19px; height: 9px; line-height: 9px; text-align: center; background: #a05a1e; color: #fff; }
  .lcno { padding-left: 2px; }
  .stepper { display: flex; gap: 1px; margin: 0 1px; }
  .stepper button { width: 9px; height: 13px; background: #e6e6f1; font-size: 8px; }
  .field { display: flex; align-items: center; gap: 2px; height: 13px; background: #e6e6f1; padding-left: 2px; flex: none; }
  .analysis { width: 77px; }
  .analysis .ico, .results .ico { width: 10px; height: 10px; }
  .results { width: 104px; margin: 0 1px 0 4px; padding-left: 5px; gap: 4px; height: 15px; }
  .csys { width: 82px; gap: 3px; margin: 0 2px 0 1px; }
  .marked { outline: 2px solid #e51212; outline-offset: -1px; }

  main { flex: 1; min-height: 0; display: flex; gap: 2px; padding: 1px 1px 0; }
  .dock { display: flex; align-items: center; gap: 5px; height: 13px; flex: none; padding: 0 2px 0 3px; background: #d5e3f1; }
  .dock h2 { flex: 1; font-size: 7px; font-weight: 500; }
  .nav { width: 173px; flex: none; display: flex; flex-direction: column; box-sizing: border-box; border-right: 2px solid #d6d6dc; background: #fff; }
  .treebox { flex: 1; min-height: 0; display: flex; overflow: hidden; }
  ul { flex: 1; min-width: 0; list-style: none; display: flex; flex-direction: column; margin: 1px 0 -6px; padding: 0 0 0 1px; }
  li { flex: 1 1 0; min-height: 0; display: flex; align-items: center; gap: 3px; white-space: nowrap; overflow: hidden; line-height: 10px; }
  li .ico { width: 11px; height: 11px; }
  li.lv0 { padding-left: 2px; }
  li.lv2 { padding-left: 13px; }
  li.lv3 { padding-left: 26px; }
  li.bold { font-weight: 700; }
  .twist { width: 11px; flex: none; display: flex; justify-content: center; }
  .twist svg { width: 7px; height: 7px; fill: none; stroke: #777; stroke-width: 1.2; }
  .twist svg.open { transform: rotate(90deg); stroke: #222; }
  .vscroll { width: 9px; background: #f2f2f2; display: flex; justify-content: center; }
  .vscroll span { width: 1px; height: 75%; margin-top: 11px; background: #808080; }
  .hscroll { height: 10px; flex: none; background: #f2f2f2; display: flex; align-items: center; }
  .hscroll span { width: 68%; height: 1px; margin-left: 11px; background: #808080; }
  .navtabs { display: flex; height: 16px; flex: none; background: #f6f6f8; }
  .navtabs button { width: 24px; display: flex; align-items: center; justify-content: center; background: #ececec; border-right: 1px solid #f8f8f8; }
  .navtabs button.cur { background: #fff; }
  .navtabs .ico { width: 11px; height: 11px; }

  .work { flex: 1; min-width: 0; display: flex; flex-direction: column; gap: 3px; }
  .view { flex: 1; min-height: 0; background: #fff; }
  .scene { width: 100%; height: 100%; display: block; }
  .scene text { font-size: 21px; }
  .scene .face { font-size: 26px; font-weight: 700; }

  .panel { flex: none; display: flex; flex-direction: column; }
  .sheet { position: relative; background: #fff; padding-bottom: 11px; margin-top: 2px; overflow: hidden; }
  table { width: 100%; table-layout: fixed; border-collapse: separate; border-spacing: 0; }
  .cno { width: 38px; }
  .c1 { width: 54px; }
  .c2 { width: 52px; }
  .c3 { width: 55px; }
  th, td { box-sizing: border-box; height: 10px; padding: 0; line-height: 9px; font-weight: 400; }
  thead th { background: #eeeeee; }
  thead .strip th { height: 6px; background: #dedede; border-right: 1px solid #eaeaea; }
  .units th { border-right: 1px solid #ddd; border-bottom: 1px solid #ddd; }
  .units small { font-size: 6px; }
  th.rowno { background: #dfdfdf; border-right: 1px solid #eee; border-bottom: 1px solid #ececec; }
  td { position: relative; text-align: right; padding-right: 10px; border-right: 1px solid #e8e4dc; border-bottom: 1px solid #e8e4dc; background: #fffdf5; }
  tbody tr:nth-child(odd) td { background: #fff7e6; }
  td.focus { outline: 1px dashed #333; outline-offset: -1px; }
  .num { position: relative; }
  .bar { position: absolute; left: 24px; top: 1px; height: 7px; background: #f9bcbc; }
  .bar.neg { left: auto; right: calc(100% - 24px); background: #d8e4fc; }
  .highlight { position: absolute; left: 197px; top: 4px; width: 164px; height: 124px; border: 2px solid #e51212; }

  .tabs { display: flex; align-items: center; height: 14px; background: #f3f3f5; border-top: 1px solid #ccc; box-sizing: border-box; }
  .step { width: 11px; }
  .count { padding: 0 8px; }
  .tab { height: 13px; padding: 0 4px; background: #e8e8ea; border-right: 1px solid #ccc; white-space: nowrap; }
  .tab.cur { background: #fff; position: relative; padding: 0 6px; }
  .tab.marked { outline-offset: 0; }

  footer { height: 6px; flex: none; display: grid; grid-template-columns: 368fr 67fr 130fr 42fr 48fr 96fr 9fr; background: #e9e9f2; overflow: hidden; border-top: 1px solid #d8d8e0; box-sizing: border-box; }
  footer span { min-width: 0; padding-left: 2px; border-right: 1px solid #d0d0da; line-height: 8px; white-space: nowrap; }
</style>
